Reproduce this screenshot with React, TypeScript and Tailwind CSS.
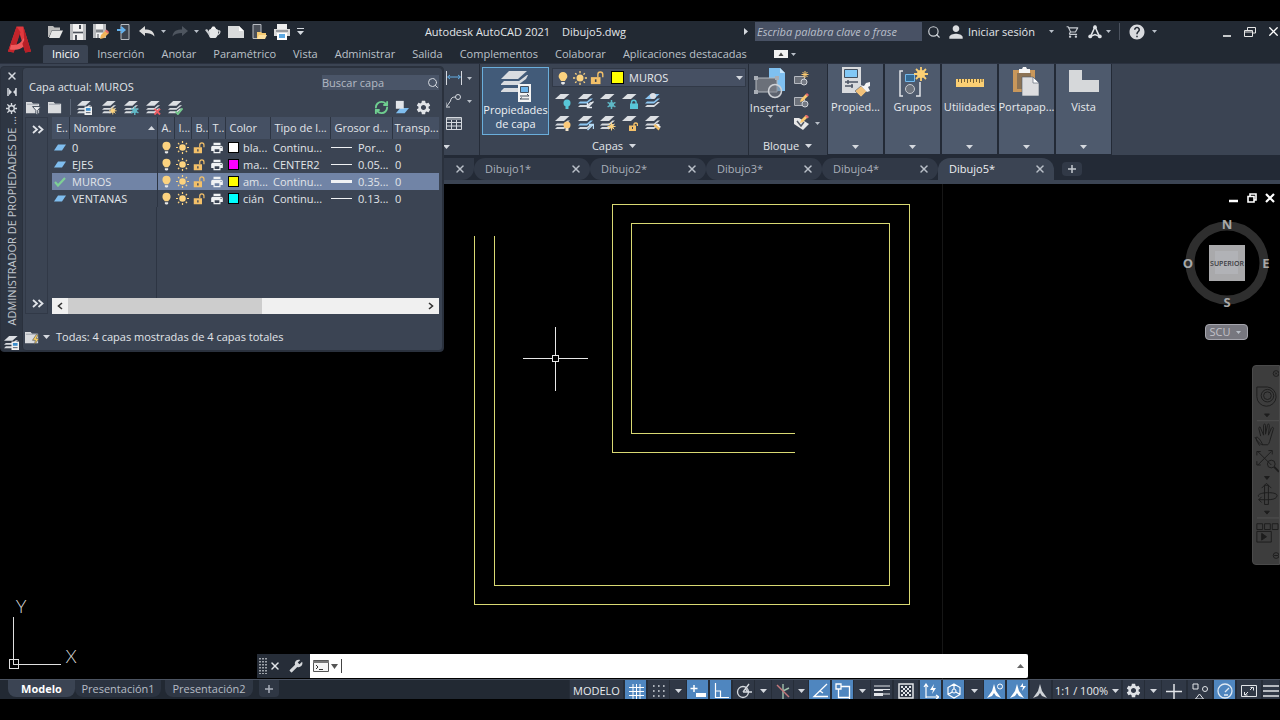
import { useState } from "react";
import type { ReactNode } from "react";
import { MdBuild, MdHelp, MdOutlineShoppingCart, MdPerson, MdPrint, MdSettings } from "react-icons/md";
import { RefreshCw, Search, X } from "lucide-react";

// ===== Types =====
type Layer = {
  name: string;
  color: string;
  colorName: string;
  linetype: string;
  weight: string;
  thick?: boolean;
};

type Badge = "sun" | "snow" | "x" | "check" | "panel" | "bulb" | "bulbOn" | "arrowIn" | "arrowOut" | "lock" | "unlock" | "brush" | "ball";

// ===== Data =====
const MENU = [
  "Inicio", "Inserción", "Anotar", "Paramétrico", "Vista", "Administrar",
  "Salida", "Complementos", "Colaborar", "Aplicaciones destacadas",
];

const LAYERS: Layer[] = [
  { name: "0", color: "#ffffff", colorName: "bla...", linetype: "Continu...", weight: "Por..." },
  { name: "EJES", color: "#ff00ff", colorName: "ma...", linetype: "CENTER2", weight: "0.05..." },
  { name: "MUROS", color: "#ffff00", colorName: "am...", linetype: "Continu...", weight: "0.35...", thick: true },
  { name: "VENTANAS", color: "#00ffff", colorName: "cián", linetype: "Continu...", weight: "0.13..." },
];

const FILES = ["Dibujo1*", "Dibujo2*", "Dibujo3*", "Dibujo4*", "Dibujo5*"];

const TOOLS: { badge: Badge; label: string; single?: boolean; blue?: boolean }[] = [
  { badge: "bulb", label: "Desactivar", single: true },
  { badge: "arrowIn", label: "Establecer actual", blue: true },
  { badge: "snow", label: "Inutilizar", single: true },
  { badge: "lock", label: "Bloquear", single: true },
  { badge: "ball", label: "Igualar capa", blue: true },
  { badge: "bulbOn", label: "Activar todas" },
  { badge: "arrowOut", label: "Capa anterior", blue: true },
  { badge: "sun", label: "Reutilizar todas" },
  { badge: "unlock", label: "Desbloquear", single: true },
  { badge: "brush", label: "Copiar propiedades" },
];

// ===== Icons =====
function Caret({ className = "" }: { className?: string }) {
  return (
    <svg width="7" height="4" viewBox="0 0 7 4" className={`shrink-0 ${className}`}>
      <path d="M0 0h7L3.500 4z" fill="#d5d9df" />
    </svg>
  );
}

function SmallCaret() {
  return (
    <svg width="5" height="3" viewBox="0 0 5 3" className="shrink-0">
      <path d="M0 0h5L2.500 3z" fill="#b9bfc8" />
    </svg>
  );
}

function Svg({ children, w = 16, h = 16, box = "0 0 16 16" }: { children: ReactNode; w?: number; h?: number; box?: string }) {
  return (
    <svg width={w} height={h} viewBox={box} fill="none" className="shrink-0">
      {children}
    </svg>
  );
}

function Bulb({ size = 14 }: { size?: number }) {
  return (
    <Svg w={size} h={size}>
      <path d="M8 1a5 5 0 0 0-5 5c0 2.500 2 3.500 2.800 5.500h4.400C11 9.500 13 8.500 13 6a5 5 0 0 0-5-5z" fill="#fbd27f" />
      <path d="M6 12.500h4v1.500l-1 1.500H7L6 14z" fill="#e8e8e8" />
    </Svg>
  );
}

function Sun({ size = 14 }: { size?: number }) {
  return (
    <Svg w={size} h={size}>
      <circle cx="8" cy="8" r="4" fill="#fbd27f" />
      <path d="M8 0v2.500M8 13.500V16M0 8h2.500M13.500 8H16M2.500 2.500l1.600 1.600M12 12l1.600 1.600M13.500 2.500L12 4.100M4 12l-1.500 1.600" stroke="#fbd27f" strokeWidth="1.5" />
    </Svg>
  );
}

function Unlock({ size = 14 }: { size?: number }) {
  return (
    <Svg w={size} h={size}>
      <path d="M9 7V4a2.800 2.800 0 0 1 5.600 0v3" stroke="#f3c069" strokeWidth="1.6" />
      <path d="M1 7h11v8H1z" fill="#f3c069" />
      <path d="M6.500 9.500v3" stroke="#3b4453" strokeWidth="1.8" />
    </Svg>
  );
}

function badgeShape(badge: Badge) {
  switch (badge) {
    case "sun":
      return (
        <>
          <circle cx="11.500" cy="11.500" r="2.300" fill="#fbd27f" />
          <path d="M11.500 7.500v8M7.500 11.500h8M8.700 8.700l5.600 5.600M14.300 8.700l-5.600 5.600" stroke="#fbd27f" />
        </>
      );
    case "snow":
      return (
        <>
          <circle cx="11.500" cy="11.500" r="2.500" fill="#5fb8c6" />
          <path d="M11.500 7v9M7.600 9.300l7.800 4.500M15.400 9.300l-7.800 4.500" stroke="#5fb8c6" strokeWidth="1.500" />
        </>
      );
    case "x":
      return <path d="M9 9.500l6 6M15 9.500l-6 6" stroke="#ef5d64" strokeWidth="2" />;
    case "check":
      return <path d="M8 12l2.500 3L15.500 9" stroke="#74c98c" strokeWidth="2" />;
    case "panel":
      return (
        <>
          <path d="M8 7h8v9H8z" fill="#f0f0f0" />
          <path d="M9.500 8.500h5v3h-5z" fill="#3d8dcb" />
          <path d="M9.500 13.500h5" stroke="#4c5665" />
        </>
      );
    case "bulb":
      return (
        <>
          <circle cx="12" cy="10" r="3.500" fill="#58c6d8" />
          <path d="M10.500 13h3v3h-3z" fill="#58c6d8" />
        </>
      );
    case "bulbOn":
      return (
        <>
          <circle cx="12" cy="10" r="3.500" fill="#fbc97a" />
          <path d="M10.500 13h3v3h-3z" fill="#f0e2c8" />
        </>
      );
    case "arrowIn":
      return <path d="M15.500 8.500L10 14M9.500 10v4.500H14" stroke="#e4e8ee" strokeWidth="1.400" />;
    case "arrowOut":
      return <path d="M9.500 15l5-5M11 9.500h4.500V14" stroke="#b4daf5" strokeWidth="1.400" />;
    case "lock":
      return (
        <>
          <path d="M9.500 11V9.500a2.300 2.300 0 0 1 4.600 0V11" stroke="#58c6d8" strokeWidth="1.400" />
          <path d="M8 10.500h8V16H8z" fill="#58c6d8" />
        </>
      );
    case "unlock":
      return (
        <>
          <path d="M12 11V9a2 2 0 0 1 3.500 0v2" stroke="#f3c069" strokeWidth="1.400" />
          <path d="M7 10.500h7V16H7z" fill="#f3c069" />
          <path d="M10.500 12v2" stroke="#3b4453" />
        </>
      );
    case "brush":
      return (
        <>
          <path d="M9 10l3.500-1.500L16 12l-1.500 1z" fill="#f0f0f0" />
          <path d="M8.500 10.500l5 5 1.500-2-4.500-4.500z" fill="#f3c069" />
        </>
      );
    case "ball":
      return <circle cx="8" cy="3" r="3" fill="#dde0e6" />;
  }
}

// Stack of sheets with a small marker in the lower right corner
function LayerIcon({ badge, single, blue, size = 15 }: { badge: Badge; single?: boolean; blue?: boolean; size?: number }) {
  return (
    <Svg w={size} h={size}>
      {!single && (
        <>
          <path d="M0 14h9l6-5h-2.500L9 12H2z" fill="#d8dbe0" />
          <path d="M0 10.500h9l6-5h-2.500L9 8.500H2z" fill={blue ? "#8cc6f2" : "#d8dbe0"} />
        </>
      )}
      <path d="M5.500 1h9L9 6H0z" fill={badge === "ball" ? "#8cc6f2" : "#dcdfe3"} />
      {badgeShape(badge)}
    </Svg>
  );
}

function FolderIcon({ filter, flash }: { filter?: boolean; flash?: boolean }) {
  return (
    <Svg w={15} h={15}>
      <path d="M0 2h6l1.500 2H14v10H0z" fill="#d9dbde" />
      <path d="M1 4.500h12" stroke="#9aa0a9" />
      {filter && <path d="M7 7h9l-3.500 4v5l-2-1v-4z" fill="#eceef0" stroke="#3b4453" />}
      {flash && <path d="M12 5l-4 6h3l-1 5 5-7h-3l2-4z" fill="#fbd05f" stroke="#3b4453" strokeWidth=".6" />}
    </Svg>
  );
}

function ParallelIcon() {
  return (
    <Svg w={12} h={7} box="0 0 12 7">
      <path d="M4 .5h8L8 6.500H0z" fill="#7fbdee" />
    </Svg>
  );
}

function AppLogo() {
  return (
    <svg width="25" height="30" viewBox="0 0 26 30" className="shrink-0">
      <path d="M10 1h7l8 26-6 1-6-20-6 20-6-1z" fill="#e0393e" />
      <path d="M10 1l4 6-7 21-6-1z" fill="#c3242b" />
      <path d="M4 20c7 1 11-2 13-7l3 5c-3 6-9 8-17 7z" fill="#ef5a5c" />
      <path d="M17 1l8 26-6 1-3-9 2-4z" fill="#b81f27" />
    </svg>
  );
}

const QUICK: { label: string; icon: ReactNode; caret?: boolean }[] = [
  {
    label: "Abrir",
    icon: (
      <Svg>
        <path d="M1 2h5l1.500 1.500H13V6H5L2 13H1z" fill="#bcbcbc" />
        <path d="M5 6.500h11L12.500 14H2z" fill="#e6e6e6" />
      </Svg>
    ),
  },
  {
    label: "Guardar",
    icon: (
      <Svg>
        <path d="M0 0h16v16H0z" fill="#b9bbbe" />
        <path d="M3 0h10v7H3zM3 10h10v6H3z" fill="#f1f1f1" />
        <path d="M9 1h2v4H9zM5 11h2v5H5z" fill="#4b5059" />
        <path d="M3 8.500h10" stroke="#4b5059" />
      </Svg>
    ),
  },
  {
    label: "Guardar como",
    icon: (
      <Svg>
        <path d="M0 0h13v14H0z" fill="#b9bbbe" />
        <path d="M3 0h7v5H3zM3 9h7v5H3z" fill="#f1f1f1" />
        <path d="M3 7h7M5 10v4" stroke="#4b5059" />
        <path d="M7 15l1-4 5-5 3 3-5 5z" fill="#f0b45b" />
        <path d="M12 7l1.500-1.500L16 8l-1.500 1.500z" fill="#e66b6b" />
      </Svg>
    ),
  },
  {
    label: "Abrir desde móvil",
    icon: (
      <Svg>
        <path d="M5 .5h8v15H5z" fill="#3c424c" stroke="#b8bcc2" />
        <path d="M1 6h6M5 3l3.500 3L5 9" stroke="#64b1ec" strokeWidth="2" />
      </Svg>
    ),
  },
  {
    label: "Deshacer",
    caret: true,
    icon: (
      <Svg>
        <path d="M0 7l6-5v3.500c5 0 9 1 9.500 7C13 9.500 10 9 6 9v3z" fill="#dcdcdc" />
      </Svg>
    ),
  },
  {
    label: "Rehacer",
    caret: true,
    icon: (
      <Svg>
        <path d="M16 7l-6-5v3.500c-5 0-9 1-9.500 7C3 9.500 6 9 10 9v3z" fill="#4e555f" />
      </Svg>
    ),
  },
  {
    label: "Render",
    icon: (
      <Svg>
        <path d="M4 6c2-2 7-2 9 0 1 4-1 7-2.500 8h-5C4 13 3 10 4 6z" fill="#e4e6e8" />
        <path d="M4.500 12L0 6l2-1 3 4z" fill="#c9ccd0" />
        <path d="M12.500 7c3-1 3.500 2 0 4" stroke="#d9dbde" strokeWidth="1.300" />
        <path d="M6 5c0-1 1-1.500 1.500-2.500h2C10 3.500 11 4 11 5z" fill="#f5f5f5" />
      </Svg>
    ),
  },
  {
    label: "Nuevo",
    icon: (
      <Svg>
        <path d="M0 2h11l5 5v7H0z" fill="#d9dbdc" />
        <path d="M11 2v5h5z" fill="#fff" />
      </Svg>
    ),
  },
  {
    label: "Guardar en móvil",
    icon: (
      <Svg>
        <path d="M2 .5h8v14H2z" fill="#4a4f58" stroke="#b8bcc2" />
        <path d="M6 8h4l1 1h4v2l-2 4H6z" fill="#f4c870" />
        <path d="M8 11h8l-2 4H6z" fill="#fde0a0" />
      </Svg>
    ),
  },
  {
    label: "Imprimir",
    icon: (
      <Svg>
        <path d="M3 0h10v5H3z" fill="#eee" />
        <path d="M0 5h16v7H0z" fill="#dadada" />
        <path d="M2 7h12" stroke="#555b65" />
        <path d="M3 9h10v7H3z" fill="#fff" />
        <path d="M5 10h6v4H5z" fill="#5ea9e2" />
      </Svg>
    ),
  },
];

// ===== Title bar =====
function TitleBar() {
  return (
    <div className="flex h-[21px] items-center">
      <div className="flex">
        {QUICK.map((q) => (
          <div key={q.label} className="flex items-center">
            <button aria-label={q.label} className="flex w-[23px] justify-center">{q.icon}</button>
            {q.caret && (
              <span className="flex w-[10px] justify-center">
                <SmallCaret />
              </span>
            )}
          </div>
        ))}
        <button aria-label="Personalizar" className="flex w-[14px] flex-col items-center justify-center gap-[2px]">
          <span className="h-px w-[7px] bg-[#d5d9df]" />
          <Caret />
        </button>
      </div>
      <h1 className="flex flex-1 justify-center gap-3 whitespace-nowrap text-[#e3e6ea]">
        <span>Autodesk AutoCAD 2021</span>
        <span>Dibujo5.dwg</span>
      </h1>
      <div className="flex items-center">
        <svg width="4" height="7" viewBox="0 0 4 7" className="mr-[7px]">
          <path d="M0 0v7l4-3.500z" fill="#d5d9df" />
        </svg>
        <input
          aria-label="Buscar en la ayuda"
          placeholder="Escriba palabra clave o frase"
          className="h-[19px] w-[167px] bg-[#485164] px-[2px] italic outline-none placeholder:text-[#b9bfca]"
        />
        <button aria-label="Buscar" className="flex w-[24px] justify-center">
          <Search size={14} color="#cfd3d8" />
        </button>
        <button className="flex items-center gap-[2px] text-[#e3e6ea]">
          <MdPerson size={20} color="#dadcdf" />
          <span className="w-[66px] whitespace-nowrap text-left">Iniciar sesión</span>
        </button>
        <span className="flex w-[34px] justify-center">
          <SmallCaret />
        </span>
        <button aria-label="Tienda" className="-ml-[6px] flex w-[22px] justify-center">
          <MdOutlineShoppingCart size={14} color="#c9cdd3" />
        </button>
        <button aria-label="Aplicaciones" className="flex w-[22px] justify-center">
          <Svg w={14} h={14}>
            <path d="M8 2L3 13l5-2 5 2z" stroke="#dfe2e6" strokeWidth="1.800" />
            <circle cx="8" cy="2.500" r="2.200" fill="#dfe2e6" />
            <circle cx="2.500" cy="13" r="2.200" fill="#dfe2e6" />
            <circle cx="13.500" cy="13" r="2.200" fill="#dfe2e6" />
          </Svg>
        </button>
        <SmallCaret />
        <span className="ml-2 h-[17px] w-px bg-[#4a515d]" />
        <button aria-label="Ayuda" className="ml-2 flex w-[18px] justify-center">
          <MdHelp size={18} color="#d8dade" />
        </button>
        <span className="ml-[6px]">
          <SmallCaret />
        </span>
        <div className="ml-[63px] flex gap-[9px]">
          <button aria-label="Minimizar" className="flex w-[14px] items-center justify-center">
            <Svg w={10} h={10} box="0 0 10 10">
              <path d="M1 9h8" stroke="#fff" strokeWidth="1.500" />
            </Svg>
          </button>
          <button aria-label="Restaurar" className="flex w-[14px] items-center justify-center">
            <Svg w={12} h={12} box="0 0 12 12">
              <path d="M3.500 5V1.500h8V7H9M.5 4.500h8v6h-8zM.5 6h8" stroke="#e6e6e6" />
            </Svg>
          </button>
          <button aria-label="Cerrar" className="flex w-[14px] items-center justify-center">
            <X size={15} color="#fff" className="shrink-0" />
          </button>
        </div>
      </div>
    </div>
  );
}

function MenuTabs() {
  const [active, setActive] = useState("Inicio");
  return (
    <nav className="flex h-[21px] items-end gap-px whitespace-nowrap leading-[16px]">
      {MENU.map((m) => (
        <button
          key={m}
          onClick={() => setActive(m)}
          className={`h-[18px] rounded-t-xs ${active === m ? "bg-[#3b4453] px-[9px] text-white" : "px-2 text-[#bcc2ca]"}`}
        >
          {m}
        </button>
      ))}
      <button aria-label="Minimizar cinta" className="ml-[18px] flex h-[18px] items-center gap-[3px]">
        <svg width="14" height="8" viewBox="0 0 14 8">
          <path d="M0 0h14v8H0z" fill="#f2f2f2" />
          <path d="M4.500 6L7 2.500 9.500 6z" fill="#444" />
        </svg>
        <SmallCaret />
      </button>
    </nav>
  );
}

// ===== Ribbon =====
function LayersPanel() {
  return (
    <section className="flex w-[269px] flex-col border-l border-[#252c38] px-[2px] pt-[3px]">
      <div className="flex gap-[3px]">
        <button className="flex h-[68px] w-[67px] flex-col items-center border border-[#6aaedb] bg-[#425b79] pt-px text-[#eef1f4]">
          <Svg w={34} h={34} box="0 0 34 34">
            <path d="M10 2h18l-9 8H2zM2 15l3-3h15l8-6h1l-2 4-8 6H2zM2 22l3-3h15l5-4h4l-2 3-8 5H2z" fill="#d9dce0" />
            <path d="M19 15h13v18H19z" fill="#f3f3f3" />
            <path d="M21.500 17.500h8v6h-8z" fill="#6eb5ea" stroke="#44505f" />
            <path d="M21 27h9M21 30h9M28 25l2 2M23 28.500l-2 1.500" stroke="#44505f" />
          </Svg>
          <span className="leading-[14px]">Propiedades<br />de capa</span>
        </button>
        <div className="flex flex-1 flex-col">
          <div className="mt-px flex h-[19px] items-center gap-[3px] border border-[#313947] bg-[#465063] pl-[3px]">
            <Bulb />
            <Sun />
            <Unlock />
            <span className="ml-1 h-[13px] w-[13px] border border-black bg-[#ffff00]" />
            <div className="relative flex flex-1 items-center">
              <select aria-label="Capa" className="w-full appearance-none bg-transparent pl-[2px] text-[#e6e9ed] outline-none" defaultValue="MUROS">
                {LAYERS.map((l) => (
                  <option key={l.name}>{l.name}</option>
                ))}
              </select>
              <Caret className="absolute right-[2px]" />
            </div>
          </div>
          <div className="mt-[3px] grid w-[112px] grid-cols-5">
            {TOOLS.map((t) => (
              <button key={t.label} aria-label={t.label} className="flex h-[22px] items-center justify-center">
                <LayerIcon badge={t.badge} single={t.single} blue={t.blue} size={16} />
              </button>
            ))}
          </div>
        </div>
      </div>
      <PanelLabel>Capas</PanelLabel>
    </section>
  );
}

function PanelLabel({ children }: { children: ReactNode }) {
  return (
    <button className="mt-auto flex h-[18px] w-full items-center justify-center gap-[6px] text-[#e3e6ea]">
      {children}
      <Caret />
    </button>
  );
}

function BlockPanel() {
  return (
    <section className="mr-px flex w-[78px] flex-col border-l border-[#252c38] pt-[3px]">
      <div className="flex">
        <button className="flex w-[42px] flex-col items-center text-[#e3e6ea]">
          <Svg w={32} h={32} box="0 0 32 32">
            <path d="M15 1h11l5 5v18H15z" fill="#7fc0f0" />
            <path d="M26 1v5h5z" fill="#c8e5fa" />
            <path d="M2 11h21v14H2z" fill="#6b7079" stroke="#b5b9c0" />
            <path d="M0 9h4v4H0zM0 23h4v4H0zM21 9h4v4h-4z" fill="#a9aeb6" />
            <circle cx="21" cy="24" r="6.500" fill="#7b808988" stroke="#cfd2d7" strokeWidth="1.500" />
          </Svg>
          <span className="mt-px leading-[15px]">Insertar</span>
          <SmallCaret />
        </button>
        <div className="flex flex-1 flex-col gap-[6px] pl-[2px] pt-1">
          <button aria-label="Crear bloque">
            <Svg>
              <path d="M1.500 5.500h10v7h-10z" fill="#6b7079" stroke="#b5b9c0" />
              <circle cx="11" cy="11" r="3" fill="#747983" stroke="#cfd2d7" />
              <path d="M12 0v7M8.500 3.500h7M9.500 1l5 5M14.500 1l-5 5" stroke="#fbc96f" />
            </Svg>
          </button>
          <button aria-label="Editar bloque">
            <Svg>
              <path d="M1.500 4.500h10v8h-10z" fill="#6b7079" stroke="#b5b9c0" />
              <circle cx="12" cy="11" r="3" fill="#747983" stroke="#cfd2d7" />
              <path d="M7 9l1-3 5-5 2 2-5 5z" fill="#fbc96f" />
              <path d="M12.500 1.500l1.500-1.500 2 2-1.500 1.500z" fill="#e66b6b" />
            </Svg>
          </button>
          <button aria-label="Editar atributos" className="flex items-center gap-[6px]">
            <Svg>
              <path d="M1 3h5l10 6-6 6L1 9z" fill="#e8e8e8" />
              <path d="M4 6l4 5 3-4" stroke="#555b65" strokeWidth="1.500" />
              <path d="M7 8l1-3 5-5 2 2-5 5z" fill="#fbc96f" />
              <path d="M12 1l1.500-1.500L16 2l-1.500 1.500z" fill="#e66b6b" />
            </Svg>
            <SmallCaret />
          </button>
        </div>
      </div>
      <PanelLabel>Bloque</PanelLabel>
    </section>
  );
}

const COLLAPSED: { label: string; icon: ReactNode }[] = [
  {
    label: "Propied...",
    icon: (
      <>
        <path d="M2 1h19v26H2z" fill="#d9dbde" />
        <path d="M4.500 3.500h13v8h-13z" fill="#82c8f6" stroke="#44505f" />
        <path d="M5 16h13M5 20h8M8 14v4M12 18v4" stroke="#4c5665" strokeWidth="1.500" />
        <path d="M15 25l6-5 6 5-6 6z" fill="#f3c27a" stroke="#4e5a6d" strokeWidth=".6" />
        <path d="M20 19l4 1 2-3 4-1v4l-2 1 2 4-3 1z" fill="#f5f5f5" />
      </>
    ),
  },
  {
    label: "Grupos",
    icon: (
      <>
        <path d="M6 5H3v25h3M19 30h4V16" stroke="#e1e4e8" strokeWidth="1.500" />
        <path d="M8.500 8.500h9v7h-9z" fill="#346b96" stroke="#74b9ec" />
        <circle cx="13" cy="23" r="4.500" fill="#6d737d" stroke="#c7cbd1" />
        <circle cx="24" cy="8" r="4" fill="#fbcf73" />
        <path d="M24 1v14M17 8h14M19 3l10 10M29 3L19 13" stroke="#fbcf73" strokeWidth="1.800" />
      </>
    ),
  },
  {
    label: "Utilidades",
    icon: (
      <>
        <path d="M2 13h28v8H2z" fill="#fbcf73" />
        <path d="M4.500 13v3M7.500 13v4M10.500 13v3M13.500 13v4M16.500 13v3M19.500 13v4M22.500 13v3M25.500 13v4M28 13v3" stroke="#735f35" />
      </>
    ),
  },
  {
    label: "Portapap...",
    icon: (
      <>
        <path d="M2 4h22v22H2z" fill="#c8975b" />
        <path d="M6 7h14v16H6z" fill="#8c7355" />
        <path d="M8 3h3l1-2h3l1 2h3v4H8z" fill="#f5f5f5" />
        <path d="M11 11h11l6 6v13H11z" fill="#dddddf" stroke="#4e5a6d" strokeWidth=".6" />
        <path d="M22 11v6h6z" fill="#fff" stroke="#4c5665" strokeWidth=".6" />
      </>
    ),
  },
  { label: "Vista", icon: <path d="M1 4h13v10h17v12H1z" fill="#d6d8da" /> },
];

function Ribbon() {
  return (
    <div className="flex h-[92px] border-t border-[#2b3240] bg-[#3b4453] pl-[443px]">
      <section className="flex w-[36px] flex-col pl-[3px]">
        <button aria-label="Cota lineal" className="mt-[6px] flex h-[16px] items-center gap-[5px]">
          <Svg>
            <path d="M.5 1v14M15.500 1v14" stroke="#d5d9df" />
            <path d="M2 7h12M4 5L1.500 7 4 9M12 5l2.500 2L12 9" stroke="#64aee6" />
          </Svg>
          <SmallCaret />
        </button>
        <button aria-label="Directriz" className="mt-[7px] flex h-[16px] items-center gap-[5px]">
          <Svg>
            <circle cx="12" cy="4" r="2.500" stroke="#d5d9df" />
            <path d="M9.500 4C6 4 5 5 4.500 8L1 13M0 9.500V14h4" stroke="#d5d9df" />
          </Svg>
          <SmallCaret />
        </button>
        <button aria-label="Tabla" className="mt-[7px] h-[16px]">
          <Svg>
            <path d="M.5 1.500h15v12H.5zM0 3h16M.5 6.500h15M.5 10h15M5.500 4v9M10.500 4v9" stroke="#d5d9df" />
          </Svg>
        </button>
        <Caret className="mt-auto mb-[6px] -ml-[3px]" />
      </section>
      <LayersPanel />
      <BlockPanel />
      <div className="flex gap-[2px] bg-[#232a36] px-px">
        {COLLAPSED.map((p) => (
          <button key={p.label} className="flex h-[90px] w-[55px] flex-col items-center bg-[#4e5a6d] pt-[2px] text-[#e8ebee]">
            <Svg w={32} h={32} box="0 0 32 32">{p.icon}</Svg>
            <span className="mt-px leading-[16px]">{p.label}</span>
            <Caret className="mt-auto mb-[5px]" />
          </button>
        ))}
      </div>
    </div>
  );
}

function FileTabs() {
  const [current, setCurrent] = useState("Dibujo5*");
  return (
    <div className="flex h-[29px] border-b-4 border-[#3b4453] bg-[#232a36] pl-[444px] pt-[3px]">
      <div className="flex w-[30px] items-center rounded-br-xl bg-[#313947] pl-[10px]">
        <X size={12} color="#b9bfc8" strokeWidth={3} />
      </div>
      {FILES.map((f) => (
        <div
          key={f}
          className={`flex w-[116px] items-center justify-between rounded-t-xl pl-[11px] pr-2 ${f === current ? "bg-[#3b4453] text-[#eef0f2]" : "rounded-b-xl bg-[#313947] text-[#aab0ba]"}`}
        >
          <button onClick={() => setCurrent(f)}>{f}</button>
          <button aria-label={`Cerrar ${f}`}>
            <X size={12} color="#b9bfc8" strokeWidth={3} />
          </button>
        </div>
      ))}
      <button aria-label="Nuevo dibujo" className="my-[4px] ml-2 flex w-[20px] items-center justify-center rounded bg-[#313947]">
        <Svg w={8} h={8} box="0 0 8 8">
          <path d="M4 0v8M0 4h8" stroke="#c4c9d0" strokeWidth="1.500" />
        </Svg>
      </button>
    </div>
  );
}

// ===== Layer palette =====
function LayerTable() {
  const [selected, setSelected] = useState("MUROS");
  const th = "border-r border-[#2d3543] pl-[4px] text-left font-normal overflow-hidden";
  return (
    <table className="w-full table-fixed border-collapse whitespace-nowrap text-[#e1e4e9]">
      <colgroup>
        <col className="w-[17px]" />
        <col className="w-[88px]" />
        <col className="w-[17px]" />
        <col className="w-[17px]" />
        <col className="w-[17px]" />
        <col className="w-[17px]" />
        <col className="w-[45px]" />
        <col className="w-[60px]" />
        <col className="w-[62px]" />
        <col />
      </colgroup>
      <thead>
        <tr className="h-[22px] bg-[#455063]">
          <th className={th}>E..</th>
          <th className={th}>
            <span className="flex items-center justify-between pr-[2px]">
              Nombre
              <Caret className="rotate-180" />
            </span>
          </th>
          <th className={th}>A.</th>
          <th className={th}>I...</th>
          <th className={th}>B..</th>
          <th className={th}>T..</th>
          <th className={th}>Color</th>
          <th className={th}>Tipo de l...</th>
          <th className={th}>Grosor d...</th>
          <th className="pl-[2px] text-left font-normal">Transp...</th>
        </tr>
      </thead>
      <tbody>
        {LAYERS.map((l) => (
          <tr key={l.name} onClick={() => setSelected(l.name)} className={`h-[17px] ${l.name === selected ? "bg-[#7184a6]" : ""}`}>
            <td className="pl-[2px]">
              {l.name === selected ? (
                <Svg w={12} h={10} box="0 0 12 10">
                  <path d="M1 5l3 3.500L11 1" stroke="#7ed095" strokeWidth="2.200" />
                </Svg>
              ) : (
                <ParallelIcon />
              )}
            </td>
            <td className="border-r border-[#2d3543] pl-[3px]">{l.name}</td>
            <td className="pl-[2px]"><Bulb size={13} /></td>
            <td className="pl-[2px]"><Sun size={13} /></td>
            <td className="pl-[2px]"><Unlock size={12} /></td>
            <td className="pl-[2px]"><MdPrint size={14} color="#f0f2f4" /></td>
            <td>
              <span className="flex items-center gap-1 pl-[3px]">
                <span className="h-[11px] w-[11px] shrink-0 border border-black" style={{ backgroundColor: l.color }} />
                {l.colorName}
              </span>
            </td>
            <td className="pl-[3px]">{l.linetype}</td>
            <td>
              <span className="flex items-center gap-[6px]">
                <span className={`ml-px w-[21px] shrink-0 bg-[#f0f2f4] ${l.thick ? "h-[3px]" : "h-px"}`} />
                {l.weight}
              </span>
            </td>
            <td className="pl-[3px]">0</td>
          </tr>
        ))}
      </tbody>
    </table>
  );
}

function Chevrons() {
  return (
    <Svg w={12} h={9} box="0 0 12 9">
      <path d="M1 1l4 3.500L1 8M6.500 1l4 3.500-4 3.500" stroke="#e1e4e9" strokeWidth="1.800" />
    </Svg>
  );
}

function LayerPalette() {
  return (
    <aside className="absolute left-0 top-[45px] flex w-[444px] rounded border border-[#2a313d] bg-[#2e3643] text-[#e1e4e9]">
      <div className="flex w-[21px] flex-col items-center">
        <button aria-label="Cerrar paleta" className="mt-[3px]">
          <X size={12} color="#d5d9df" strokeWidth={3} />
        </button>
        <button aria-label="Ocultar automáticamente" className="mt-[5px]">
          <Svg w={10} h={10} box="0 0 10 10">
            <path d="M1 1v8M9 1v8" stroke="#d5d9df" strokeWidth="1.500" />
            <path d="M2 2l3 3-3 3zM9 2L6 5l3 3z" fill="#d5d9df" />
          </Svg>
        </button>
        <button aria-label="Propiedades de paleta" className="mt-[6px]">
          <Svg w={11} h={11}>
            <circle cx="8" cy="8" r="4" stroke="#d5d9df" strokeWidth="2" />
            <path d="M8 0v4M8 12v4M0 8h4M12 8h4M2 2l3 3M11 11l3 3M14 2l-3 3M2 14l3-3" stroke="#d5d9df" strokeWidth="2" />
          </Svg>
        </button>
        <p className="mt-auto mb-[9px] rotate-180 whitespace-nowrap leading-[16px] text-[#c2c7ce] [writing-mode:vertical-rl]">
          ADMINISTRADOR DE PROPIEDADES DE ...
        </p>
        <span className="mb-px">
          <LayerIcon badge="panel" />
        </span>
      </div>
      <div className="min-w-0 flex-1 rounded border border-[#2a313d] bg-[#3b4453] pl-[2px] pr-[3px]">
        <div className="flex h-[29px] items-start justify-between pl-1 pt-[7px]">
          <p className="mt-[3px] leading-[18px]">Capa actual: MUROS</p>
          <label className="flex h-[15px] w-[117px] items-center bg-[#4a5568]">
            <input aria-label="Buscar capa" placeholder="Buscar capa" className="w-full min-w-0 bg-transparent outline-none placeholder:text-[#b4bac4]" />
            <Search size={12} color="#d5d9df" className="shrink-0" />
          </label>
        </div>
        <div className="flex h-[20px] items-center pl-px pr-[7px]">
          <button aria-label="Nuevo filtro de propiedades" className="flex w-[22px]"><FolderIcon filter /></button>
          <button aria-label="Nuevo filtro de grupo" className="flex w-[22px]"><FolderIcon /></button>
          <span className="h-[16px] w-px bg-[#5c6676]" />
          <div className="flex gap-[7px] pl-[6px]">
            <button aria-label="Estados de capa" className="mr-[3px]"><LayerIcon badge="panel" /></button>
            <button aria-label="Nueva capa"><LayerIcon badge="sun" /></button>
            <button aria-label="Nueva capa inutilizada"><LayerIcon badge="snow" /></button>
            <button aria-label="Suprimir capa"><LayerIcon badge="x" /></button>
            <button aria-label="Definir actual"><LayerIcon badge="check" /></button>
          </div>
          <div className="ml-auto flex items-center gap-[6px]">
            <button aria-label="Actualizar"><RefreshCw size={15} color="#6fce90" strokeWidth={3} /></button>
            <button aria-label="Modificaciones">
              <Svg w={14} h={14}>
                <path d="M6 9h10l-5 6H1z" fill="#7fbdee" />
                <path d="M1 1h9v9H1z" fill="#e1e4e8" />
              </Svg>
            </button>
            <button aria-label="Configuración"><MdSettings size={17} color="#e1e4e8" /></button>
          </div>
        </div>
        <div className="flex h-[197px]">
          <div className="mr-1 flex w-[23px] flex-col items-center justify-between border border-[#313947] pb-[5px] pl-[2px] pt-[7px]">
            <button aria-label="Expandir árbol"><Chevrons /></button>
            <button aria-label="Expandir filtros"><Chevrons /></button>
          </div>
          <div className="flex min-w-0 flex-1 flex-col">
            <LayerTable />
            <div className="w-[105px] flex-1 border-r border-[#2d3543]" />
            <div className="flex h-[16px] bg-[#f0f0f0]">
              <button aria-label="Desplazar a la izquierda" className="flex w-[16px] items-center justify-center">
                <Svg w={6} h={8} box="0 0 6 8"><path d="M5 1L1.500 4 5 7" stroke="#333" strokeWidth="1.600" /></Svg>
              </button>
              <div className="w-1/2 bg-[#cdcdcd]" />
              <button aria-label="Desplazar a la derecha" className="ml-auto flex w-[16px] items-center justify-center">
                <Svg w={6} h={8} box="0 0 6 8"><path d="M1 1l3.500 3L1 7" stroke="#333" strokeWidth="1.600" /></Svg>
              </button>
            </div>
          </div>
        </div>
        <div className="flex h-[36px] items-center pt-[10px]">
          <FolderIcon flash />
          <Caret className="ml-[3px]" />
          <p className="ml-[6px] leading-[18px]">Todas: 4 capas mostradas de 4 capas totales</p>
        </div>
      </div>
    </aside>
  );
}

// ===== Drawing area =====
function ViewCube() {
  return (
    <div className="absolute right-[8px] top-[32px] flex flex-col items-center">
      <svg width="92" height="94" viewBox="0 0 92 94" fontFamily="Open Sans, sans-serif" fontWeight="700" textAnchor="middle">
        <circle cx="47" cy="47" r="37" fill="none" stroke="#2e2e2e" strokeWidth="9" />
        <path d="M29 29h36v36H29z" fill="#a9a9ab" />
        <path d="M35 35h23v23H35z" fill="#b1b2b6" />
        <text x="47" y="50" fontSize="7" fontWeight="600" fill="#3b3b3f">SUPERIOR</text>
        <g fontSize="13" fill="#a8a8a8">
          <text x="47" y="13">N</text>
          <text x="47" y="91">S</text>
          <text x="8" y="52">O</text>
          <text x="86" y="52">E</text>
        </g>
      </svg>
      <button className="mt-[14px] flex h-[16px] w-[43px] items-center gap-[6px] rounded-[4px] border border-[#a5a5ad] bg-[#77777f] pl-[4px] text-[#c2c2c8]">
        SCU
        <SmallCaret />
      </button>
    </div>
  );
}

function NavBar() {
  return (
    <div className="absolute right-0 top-[181px] flex h-[200px] w-[28px] rounded-l-[4px] border border-[#4a4a4a] bg-[#3d3d3d]">
      <svg width="27" height="198" viewBox="0 0 27 198" fill="none" stroke="#1d1d1d">
        <circle cx="24" cy="4" r="3" />
        <path d="M23 3l2 2M25 3l-2 2" />
        <path d="M4 18h11a10 10 0 1 1-11 10z" />
        <circle cx="15" cy="27" r="6.500" />
        <circle cx="15" cy="27" r="4" />
        <path d="M12 46h5l-2.500 3zM12 111h5l-2.500 3zM12 147h5l-2.500 3z" fill="#1d1d1d" />
        <path d="M4 53h23M4 154h23" stroke="#505050" />
        <path d="M10 78c-2-5-5-8-6-8s-1 2 0 4 3 5 3 5M8 69l-2-8c0-2 2-2 2 0l3 7V58c0-2 2-2 2 0v9l2-9c0-2 2-2 2 0l-1 10 3-7c1-2 3-1 2 1l-3 10c-1 4-2 6-3 6h-5c-3 0-6-5-8-8" />
        <path d="M5 85l14 14M19 85L5 99M4 89v-4h4M16 84h4v4M4 95v4h4" />
        <circle cx="19" cy="98" r="4" />
        <path d="M22 101l5 5" strokeWidth="2" />
        <path d="M12 120h4v20h-4zM9 123l5-5 5 5" />
        <path d="M6 132c-4-5 20-6 19-1s-10 4-19 4l3-3M6 135l3 3" />
        <path d="M4 160h6v6H4zM12 160h6v6h-6zM20 160h6v6h-6z" />
        <path d="M4 168h15v11H4z" />
        <path d="M9 170v7l5-3.500z" fill="#1d1d1d" />
        <circle cx="24" cy="193" r="3" />
        <path d="M22 193h4" />
      </svg>
    </div>
  );
}

function Drawing() {
  return (
    <svg className="absolute inset-0 h-full w-full" fill="none" shapeRendering="crispEdges">
      <path d="M942.500 0v495" stroke="#161616" />
      <path
        d="M474.500 52V420.500H909.500V20.500H612.500V268.500H795M494.500 52V401.500H889.500V39.500H631.500V249.500H795"
        stroke="#d9d973"
      />
      {/* crosshair */}
      <path d="M555.500 143v29M555.500 178v29M523 174.500h30M559 174.500h29M552.500 171.500h6v6h-6z" stroke="#e8e8e8" />
      {/* UCS icon */}
      <path d="M13.500 433v47.500H61M9.500 475.500h9v9h-9z" stroke="#e0e0e0" />
      <g fill="#d8d8d8" fontFamily="Lato, sans-serif" fontWeight="300" fontSize="18" textAnchor="middle">
        <text x="21" y="429">Y</text>
        <text x="71" y="479">X</text>
      </g>
    </svg>
  );
}

function CommandLine() {
  return (
    <div className="absolute bottom-px left-[257px] right-[252px] flex h-[24px] items-center bg-[#262d38]">
      <svg width="9" height="16" viewBox="0 0 9 16" className="ml-[2px]">
        <path d="M1 0v16M4 0v16M7 0v16" stroke="#c6cad0" strokeWidth="1.500" strokeDasharray="1.500 1.500" />
      </svg>
      <button aria-label="Cerrar línea de comando" className="flex w-[14px] justify-center"><X size={12} color="#e1e4e8" strokeWidth={3} className="shrink-0" /></button>
      <button aria-label="Personalizar línea" className="flex w-[28px] justify-center"><MdBuild size={14} color="#d5d8dc" className="-scale-x-100" /></button>
      <div className="flex h-full flex-1 items-center rounded-r-[2px] bg-white pl-[3px] pr-1">
        <Svg w={16} h={12} box="0 0 16 12">
          <path d="M.5.500h15v11H.5z" fill="#f5f5f5" stroke="#555" />
          <path d="M0 2h16" stroke="#777" strokeWidth="2" />
          <path d="M3 5l2 2-2 2M6 9.500h4" stroke="#333" />
        </Svg>
        <svg width="7" height="5" viewBox="0 0 7 5" className="ml-[2px]"><path d="M0 0h7L3.500 5z" fill="#555" /></svg>
        <span className="ml-[3px] h-[14px] w-px bg-[#444]" />
        <input aria-label="Línea de comando" className="min-w-0 flex-1 bg-transparent text-black outline-none" />
        <svg width="7" height="4" viewBox="0 0 7 4"><path d="M0 4h7L3.500 0z" fill="#666" /></svg>
      </div>
    </div>
  );
}

function Canvas() {
  return (
    <main className="relative min-h-[495px] flex-1 overflow-hidden bg-black">
      <Drawing />
      <div className="absolute right-[5px] top-[9px] flex items-center gap-[8px]">
        <Svg w={11} h={10} box="0 0 11 10"><path d="M1 8h9" stroke="#fff" strokeWidth="2.500" /></Svg>
        <Svg w={10} h={10} box="0 0 10 10"><path d="M3 3V1h6v6H7M1 3.500h6V9H1z" stroke="#fff" strokeWidth="1.600" /></Svg>
        <Svg w={10} h={10} box="0 0 10 10"><path d="M1 1l8 8M9 1L1 9" stroke="#fff" strokeWidth="2.200" /></Svg>
      </div>
      <ViewCube />
      <NavBar />
      <CommandLine />
    </main>
  );
}

// ===== Status bar =====
function StatusButton({ on, label, width = "w-[23px]", children }: { on?: boolean; label: string; width?: string; children: ReactNode }) {
  return (
    <button aria-label={label} className={`flex h-[21px] shrink-0 items-center justify-center border-x border-[#262d38] text-[#e8ebee] ${width} ${on ? "bg-[#4f86bf]" : "bg-[#303846]"}`}>
      {children}
    </button>
  );
}

function StatusCaret({ width = "w-[16px]" }: { width?: string }) {
  return (
    <span className={`flex h-[21px] shrink-0 items-center justify-center bg-[#303846] ${width}`}>
      <Caret />
    </span>
  );
}

function Anno({ mark, dim }: { mark?: ReactNode; dim?: boolean }) {
  return (
    <Svg>
      <path d="M7 1l2 7 5 7-5-2-2-3-2 3-5 2 5-7z" fill={dim ? "#cfd3d8" : "#fff"} />
      {mark}
    </Svg>
  );
}

function StatusBar() {
  return (
    <footer className="flex h-[20px] items-start justify-between overflow-hidden border-t border-[#4b5361] bg-[#222933]">
      <div className="flex h-[17px] whitespace-nowrap pl-[8px] text-[#b6bcc5]">
        <button className="w-[67px] rounded-b-lg bg-[#3b4453] font-bold leading-[14px] text-white">Modelo</button>
        <button className="w-[86px] rounded-b-lg bg-[#2b3340] leading-[14px]">Presentación1</button>
        <button className="ml-[4px] w-[88px] rounded-b-lg bg-[#2f3744] leading-[14px]">Presentación2</button>
        <button aria-label="Nueva presentación" className="ml-[6px] flex w-[20px] items-center justify-center rounded-b bg-[#2f3744]">
          <Svg w={8} h={8} box="0 0 8 8"><path d="M4 0v8M0 4h8" stroke="#aab0ba" strokeWidth="1.500" /></Svg>
        </button>
      </div>
      <div className="flex items-start">
        <StatusButton label="Modelo" width="w-[55px]"><span className="text-[11px]">MODELO</span></StatusButton>
        <StatusButton label="Rejilla" on>
          <Svg><path d="M5 1v15M8.500 1v15M12 1v15M1 4.500h15M1 8.500h15M1 12.500h15" stroke="#fff" /></Svg>
        </StatusButton>
        <StatusButton label="Forzar cursor">
          <Svg><path d="M2 3h13M2 8h13M2 13h13" stroke="#d5d9df" strokeWidth="1.600" strokeDasharray="1.600 3.400" /></Svg>
        </StatusButton>
        <StatusCaret />
        <StatusButton label="Entrada dinámica" on>
          <Svg><path d="M4 2v7M.5 5.500h7" stroke="#fff" strokeWidth="1.500" /><path d="M6 10h10v4H6z" fill="#fff" /></Svg>
        </StatusButton>
        <StatusButton label="Orto" on>
          <Svg><path d="M2.500 0v14.500H16M2.500 8h5v6" stroke="#fff" strokeWidth="1.200" /></Svg>
        </StatusButton>
        <StatusButton label="Rastreo polar">
          <Svg><circle cx="7" cy="9" r="5.500" stroke="#d5d9df" strokeWidth="1.300" /><path d="M7 9h9M7 9l6-8M9.500 6l2.500 3" stroke="#d5d9df" strokeWidth="1.300" /></Svg>
        </StatusButton>
        <StatusCaret />
        <StatusButton label="Isométrico">
          <Svg><path d="M8 1v15M8 8l6-3" stroke="#9fc0ac" strokeWidth="1.400" /><path d="M2 2l12 12" stroke="#c4787c" strokeWidth="1.400" /></Svg>
        </StatusButton>
        <StatusCaret width="w-[14px]" />
        <StatusButton label="Rastreo de referencia" on>
          <Svg><path d="M15 1L2 13.500h14M8 8l3 2" stroke="#fff" strokeWidth="1.300" /></Svg>
        </StatusButton>
        <StatusButton label="Referencia a objetos" on>
          <Svg><path d="M1 1h5v5H1zM6 3.500h8.500V16M3.500 6v8.500h11" stroke="#fff" strokeWidth="1.300" /></Svg>
        </StatusButton>
        <StatusCaret />
        <StatusButton label="Grosor de línea">
          <Svg><path d="M0 3h16" stroke="#e1e4e8" /><path d="M0 7h9" stroke="#e1e4e8" strokeWidth="2" /><path d="M9 6.500h7" stroke="#e1e4e8" /><path d="M0 11.500h9" stroke="#e1e4e8" strokeWidth="3" /><path d="M9 11h7" stroke="#e1e4e8" /></Svg>
        </StatusButton>
        <StatusButton label="Transparencia" width="w-[26px]">
          <Svg><path d="M1 1h14v14H1z" stroke="#e1e4e8" strokeWidth="1.500" /><path d="M3 4h10M3 8h10M3 12h10" stroke="#e1e4e8" strokeWidth="2" strokeDasharray="2 2" /><path d="M5 6h8M5 10h8" stroke="#e1e4e8" strokeWidth="2" strokeDasharray="2 2" /></Svg>
        </StatusButton>
        <StatusButton label="SCP dinámico" on>
          <Svg><path d="M3 15V2M1 4l2-3 2 3M3 14h12M13 12l3 2-3 2" stroke="#fff" strokeWidth="1.200" /><path d="M11 1L7 7h3l-1 4 4-6h-3z" fill="#fff" /></Svg>
        </StatusButton>
        <StatusButton label="Referencia 3D" on>
          <Svg><path d="M8 1l6 3.500v7L8 15l-6-3.500v-7zM8 1v7M8 8l-6 3.500M8 8l6 3.500" stroke="#fff" strokeWidth="1.200" /><circle cx="8" cy="8" r="2" fill="#4f86bf" stroke="#fff" /></Svg>
        </StatusButton>
        <StatusCaret width="w-[18px]" />
        <StatusButton label="Visibilidad de anotación" on><Anno mark={<circle cx="13" cy="3.500" r="2.500" stroke="#fff" />} /></StatusButton>
        <StatusButton label="Escala automática" on><Anno mark={<path d="M13 0l-3 4h3l-1 4 4-5h-3z" fill="#fff" />} /></StatusButton>
        <StatusButton label="Anotación"><Anno dim /></StatusButton>
        <StatusButton label="Escala" width="w-[70px]">
          <span className="mr-1 whitespace-nowrap">1:1 / 100%</span>
          <Caret />
        </StatusButton>
        <StatusButton label="Espacio de trabajo"><MdSettings size={17} color="#dfe2e6" /></StatusButton>
        <StatusCaret />
        <StatusButton label="Supervisor" width="w-[26px]"><Svg><path d="M8 1v15M0 8.500h16" stroke="#e1e4e8" strokeWidth="1.500" /></Svg></StatusButton>
        <StatusButton label="Aislar objetos" width="w-[26px]">
          <Svg><path d="M1 1h5v5H1zM7.500 11l4 5h-8z" stroke="#e1e4e8" /><circle cx="13" cy="6" r="2.500" stroke="#e1e4e8" /></Svg>
        </StatusButton>
        <StatusButton label="Rendimiento gráfico" on><Svg><circle cx="8" cy="8" r="7" stroke="#dfe9f3" strokeWidth="1.300" /><path d="M8 9l4-4M7 12h4" stroke="#dfe9f3" strokeWidth="1.300" /></Svg></StatusButton>
        <StatusButton label="Pantalla limpia" width="w-[26px]">
          <Svg><path d="M.5 2.500h15v11H.5z" stroke="#e1e4e8" /><path d="M9 7l3-3M9.500 4.500h3v3M7 9l-3 3M3.500 9v3h3" stroke="#e1e4e8" /></Svg>
        </StatusButton>
        <StatusButton label="Personalización" width="w-[18px]"><Svg><path d="M0 3h16M0 8h16M0 13h16" stroke="#e1e4e8" strokeWidth="1.500" /></Svg></StatusButton>
      </div>
    </footer>
  );
}

export default function App() {
  return (
    <div className="flex min-h-screen flex-col bg-black py-[21px] font-['Open_Sans','Noto_Sans',sans-serif] text-[11px] leading-[16px]">
      <div className="relative flex flex-1 flex-col">
        <header className="flex bg-[#222933]">
          <div className="w-[43px] pl-[7px] pt-[4px]">
            <AppLogo />
          </div>
          <div className="min-w-0 flex-1">
            <TitleBar />
            <MenuTabs />
          </div>
        </header>
        <Ribbon />
        <FileTabs />
        <Canvas />
        <StatusBar />
        <LayerPalette />
      </div>
    </div>
  );
}
